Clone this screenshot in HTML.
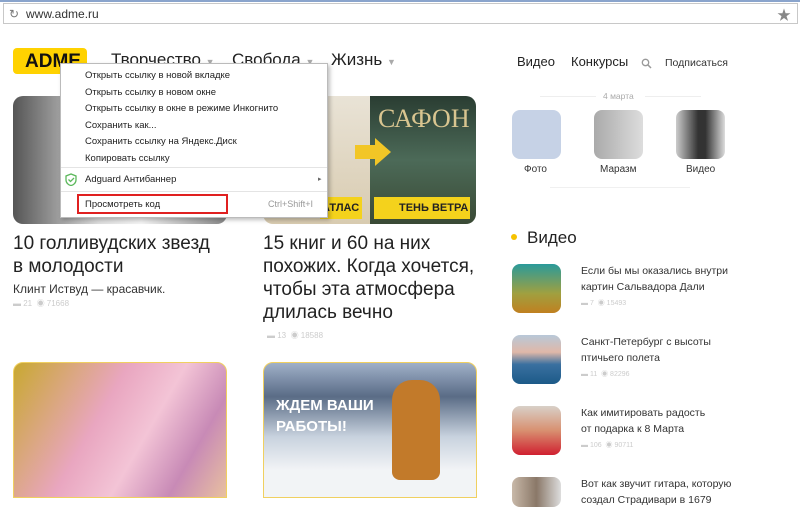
<!DOCTYPE html>
<html><head><meta charset="utf-8"><style>
*{margin:0;padding:0;box-sizing:border-box}
body{width:800px;height:498px;overflow:hidden;background:#fff;font-family:"Liberation Sans","Noto Sans CJK SC",sans-serif;color:#222;position:relative}
.a{position:absolute}
.t{white-space:nowrap}
</style></head><body>
<div class="a" style="left:0;top:0;width:800px;height:2px;background:#8aa4cc"></div>
<div class="a" style="left:3px;top:3px;width:795px;height:21px;border:1px solid #c8c8c8;background:#fff"></div>
<div class="a t" style="left:9px;top:7px;font-size:12px;color:#777">↻</div>
<div class="a t" style="left:26px;top:7px;font-size:12px;color:#333">www.adme.ru</div>
<div class="a t" style="left:777px;top:5px;font-size:14px;color:#888">★</div>

<div class="a" style="left:13px;top:48px;width:74px;height:26px;background:#ffd200;border-radius:4px"></div>
<div class="a t" style="left:25px;top:51px;font-size:19px;font-weight:bold;color:#111">ADME</div>
<div class="a t" style="left:111px;top:50px;font-size:17px">Творчество <span style="font-size:9px;color:#aaa">▼</span></div>
<div class="a t" style="left:232px;top:50px;font-size:17px">Свобода <span style="font-size:9px;color:#aaa">▼</span></div>
<div class="a t" style="left:331px;top:50px;font-size:17px">Жизнь <span style="font-size:9px;color:#aaa">▼</span></div>
<div class="a t" style="left:517px;top:54px;font-size:13px">Видео</div>
<div class="a t" style="left:571px;top:54px;font-size:13px">Конкурсы</div>
<svg class="a" style="left:641px;top:58px" width="11" height="11"><circle cx="4.5" cy="4.5" r="3.2" fill="none" stroke="#999" stroke-width="1.3"/><path d="M7 7l3 3" stroke="#999" stroke-width="1.5"/></svg>
<div class="a t" style="left:665px;top:57px;font-size:10.5px;color:#333">Подписаться</div>

<div class="a" style="left:13px;top:96px;width:214px;height:128px;border-radius:10px;background:linear-gradient(90deg,#555 0%,#ddd 40%,#f4f4f4 60%,#888 100%)"></div>
<div class="a" style="left:263px;top:96px;width:107px;height:128px;border-radius:10px 0 0 10px;background:linear-gradient(180deg,#e9e3d6,#d8cbb0)"></div>
<div class="a" style="left:370px;top:96px;width:106px;height:128px;border-radius:0 10px 10px 0;background:linear-gradient(180deg,#2a3d32,#4c6a58 50%,#3a4a35)"></div>
<div class="a t" style="left:378px;top:104px;font-size:26px;color:#d9c590;font-family:'Liberation Serif',serif">САФОН</div>
<div class="a" style="left:355px;top:145px;width:20px;height:14px;background:#f2c626"></div>
<div class="a" style="left:375px;top:138px;width:0;height:0;border-top:14px solid transparent;border-bottom:14px solid transparent;border-left:16px solid #f2c626"></div>
<div class="a" style="left:320px;top:197px;width:42px;height:22px;background:#f4d21c"></div>
<div class="a t" style="left:322px;top:202px;font-size:11px;font-weight:bold">АТЛАС</div>
<div class="a" style="left:374px;top:197px;width:96px;height:22px;background:#f4d21c"></div>
<div class="a t" style="left:399px;top:202px;font-size:11px;font-weight:bold">ТЕНЬ ВЕТРА</div>

<div class="a t" style="left:13px;top:232px;font-size:19px;line-height:23px">10 голливудских звезд<br>в молодости</div>
<div class="a t" style="left:13px;top:282px;font-size:12px;color:#333">Клинт Иствуд — красавчик.</div>
<div class="a t" style="left:13px;top:298px;font-size:8px;color:#ccc">▬ 21 &nbsp;◉ 71668</div>
<div class="a t" style="left:263px;top:232px;font-size:19px;line-height:23px">15 книг и 60 на них<br>похожих. Когда хочется,<br>чтобы эта атмосфера<br>длилась вечно</div>
<div class="a t" style="left:267px;top:330px;font-size:8px;color:#ccc">▬ 13 &nbsp;◉ 18588</div>

<div class="a" style="left:13px;top:362px;width:214px;height:136px;border:1px solid #f0d060;border-radius:10px 10px 0 0;background:linear-gradient(120deg,#c8a830,#e9a6c0 40%,#f3c4d6 60%,#c88ab6 80%,#e8c0a0)"></div>
<div class="a" style="left:263px;top:362px;width:214px;height:136px;border:1px solid #f0d060;border-radius:10px 10px 0 0;background:linear-gradient(180deg,#9fb0c8,#5a6c86 25%,#c8d2de 55%,#f2f4f6 80%)"></div>
<div class="a" style="left:392px;top:380px;width:48px;height:100px;border-radius:20px 20px 8px 8px;background:#c27a2a"></div>
<div class="a" style="left:276px;top:395px;font-size:15px;font-weight:bold;color:#fff;line-height:21px">ЖДЕМ ВАШИ<br>РАБОТЫ!</div>

<div class="a" style="left:540px;top:96px;width:56px;height:1px;background:#eee"></div>
<div class="a" style="left:645px;top:96px;width:56px;height:1px;background:#eee"></div>
<div class="a t" style="left:603px;top:91px;font-size:8.5px;color:#aaa">4 марта</div>
<div class="a" style="left:512px;top:110px;width:49px;height:49px;border-radius:8px;background:#c6d2e6"></div>
<div class="a" style="left:594px;top:110px;width:49px;height:49px;border-radius:8px;background:linear-gradient(90deg,#aaa,#ddd)"></div>
<div class="a" style="left:676px;top:110px;width:49px;height:49px;border-radius:8px;background:linear-gradient(90deg,#ccc,#333 45%,#333 60%,#ddd)"></div>
<div class="a t" style="left:524px;top:164px;font-size:10px;color:#333">Фото</div>
<div class="a t" style="left:600px;top:164px;font-size:10px;color:#333">Маразм</div>
<div class="a t" style="left:686px;top:164px;font-size:10px;color:#333">Видео</div>
<div class="a" style="left:550px;top:187px;width:140px;height:1px;background:#f0f0f0"></div>
<div class="a" style="left:511px;top:234px;width:6px;height:6px;border-radius:50%;background:#f6c200"></div>
<div class="a t" style="left:527px;top:228px;font-size:17px">Видео</div>

<div class="a" style="left:512px;top:264px;width:49px;height:49px;border-radius:8px;background:linear-gradient(180deg,#2a9a9a,#a0a040 60%,#c08020)"></div>
<div class="a" style="left:581px;top:263px;font-size:10.5px;line-height:16px;color:#333">Если бы мы оказались внутри<br>картин Сальвадора Дали</div>
<div class="a t" style="left:581px;top:298px;font-size:7px;color:#ccc">▬ 7 &nbsp;◉ 15493</div>
<div class="a" style="left:512px;top:335px;width:49px;height:49px;border-radius:8px;background:linear-gradient(180deg,#b8c8d8,#e0b8a8 35%,#3a70a0 60%,#1c5a88)"></div>
<div class="a" style="left:581px;top:334px;font-size:10.5px;line-height:16px;color:#333">Санкт-Петербург с высоты<br>птичьего полета</div>
<div class="a t" style="left:581px;top:369px;font-size:7px;color:#ccc">▬ 11 &nbsp;◉ 82296</div>
<div class="a" style="left:512px;top:406px;width:49px;height:49px;border-radius:8px;background:linear-gradient(180deg,#d8d0c8,#d89070 50%,#d02030)"></div>
<div class="a" style="left:581px;top:405px;font-size:10.5px;line-height:16px;color:#333">Как имитировать радость<br>от подарка к 8 Марта</div>
<div class="a t" style="left:581px;top:440px;font-size:7px;color:#ccc">▬ 106 &nbsp;◉ 90711</div>
<div class="a" style="left:512px;top:477px;width:49px;height:30px;border-radius:8px;background:linear-gradient(90deg,#c8b8a8,#8a7868,#ddd)"></div>
<div class="a" style="left:581px;top:476px;font-size:10.5px;line-height:16px;color:#333;white-space:nowrap">Вот как звучит гитара, которую<br>создал Страдивари в 1679</div>

<div class="a" style="left:60px;top:63px;width:268px;height:155px;background:#fff;border:1px solid #bbb;box-shadow:2px 2px 4px rgba(0,0,0,.25)"></div>
<div class="a" style="left:85px;top:68px;font-size:9.5px;line-height:16.5px;color:#222;white-space:nowrap">Открыть ссылку в новой вкладке<br>Открыть ссылку в новом окне<br>Открыть ссылку в окне в режиме Инкогнито<br>Сохранить как...<br>Сохранить ссылку на Яндекс.Диск<br>Копировать ссылку</div>
<div class="a" style="left:61px;top:167px;width:266px;height:1px;background:#e4e4e4"></div>
<svg class="a" style="left:65px;top:173px" width="12" height="13"><path d="M6 1L1 3v4c0 3 2.5 5 5 5.5C8.5 12 11 10 11 7V3z" fill="none" stroke="#5cb85c" stroke-width="1.3"/><path d="M3.5 6.5l2 2 3.5-3.5" fill="none" stroke="#5cb85c" stroke-width="1.3"/></svg>
<div class="a t" style="left:85px;top:174px;font-size:9.5px">Adguard Антибаннер</div>
<div class="a t" style="left:318px;top:175px;font-size:7px;color:#666">▸</div>
<div class="a" style="left:61px;top:191px;width:266px;height:1px;background:#e4e4e4"></div>
<div class="a" style="left:77px;top:194px;width:151px;height:20px;border:2px solid #e02020"></div>
<div class="a t" style="left:85px;top:199px;font-size:9.5px">Просмотреть код</div>
<div class="a t" style="left:268px;top:199px;font-size:9px;color:#999">Ctrl+Shift+I</div>
</body></html>
